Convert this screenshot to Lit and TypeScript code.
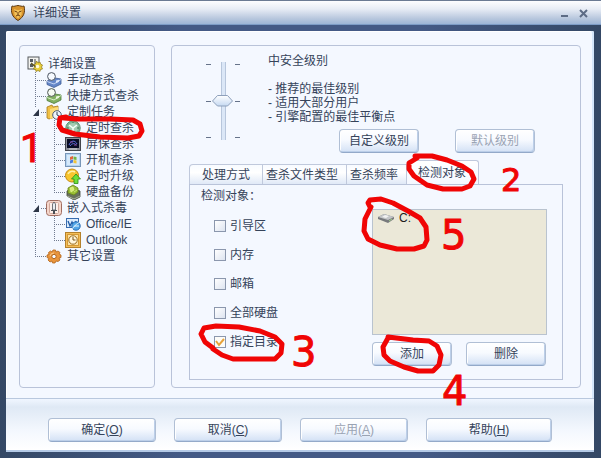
import { LitElement, html, css, svg, nothing } from "lit";
import { customElement, state } from "lit/decorators.js";
import { classMap } from "lit/directives/class-map.js";

const icons: Record<string, unknown> = {
  root: svg`<rect x="1" y="1" width="11" height="12" fill="#f4f4f0" stroke="#55585c"/><path d="M3 3h3v3H3zM3 8h3v3H3z" fill="#555a60"/><path d="M8 3v5" stroke="#444" fill="none"/><path d="M9.500 5l1.500 2 2-1 .5 2 2 1-1 2 1 2-2 .5-.5 2-2-1-2 1-.5-2-2-.5 1-2-1-2 2-1z" fill="#e8cf3c" stroke="#8d7414" stroke-width=".7"/><path d="M4 7l5 4" stroke="#5c5420" stroke-width="1.500"/><circle cx="10.500" cy="10.500" r="1.800" fill="#fffbe0"/>`,
  scanBlue: svg`<path d="M1 9l8-3 6 1v5l-7 3.500-7-3z" fill="#6486c8" stroke="#3d5a94" stroke-width=".8"/><path d="M1 9.500l7 2.500 7-4.500" fill="none" stroke="#c4d4f2"/><path d="M10 8.500l3-.8v2l-3 1.500z" fill="#dce6fa"/><circle cx="5.500" cy="4.500" r="3.900" fill="#f6faff" stroke="#4b5360"/>`,
  scanGreen: svg`<path d="M1 9l8-3 6 1v5l-7 3.500-7-3z" fill="#82b062" stroke="#4d7a38" stroke-width=".8"/><path d="M1 9.500l7 2.500 7-4.500" fill="none" stroke="#d6eec8"/><path d="M10 8.500l3-.8v2l-3 1.500z" fill="#e8f6de"/><circle cx="5.500" cy="4.500" r="3.900" fill="#f6fbf4" stroke="#4b5550"/>`,
  tasks: svg`<path d="M1 3l5-2 1 2 5-1v10l-9 3-2-1z" fill="#f0c046" stroke="#a87b1c" stroke-width=".8"/><path d="M4 5l8-2v9l-8 3z" fill="#fbdc78"/><circle cx="11" cy="11" r="4.300" fill="#eef5fc" stroke="#4d6078"/><path d="M11 8v3l2 1" fill="none" stroke="#33475f"/>`,
  clock: svg`<circle cx="8" cy="8" r="7.200" fill="#84b596" stroke="#5d8f72"/><circle cx="8" cy="8" r="5" fill="#a5cdb3"/><path d="M4 5l4 3 4-3M8 8v5" fill="none" stroke="#f5fff8" stroke-width="1.500"/><path d="M2 8h2M12 8h2M8 2v1" stroke="#3b7352"/>`,
  monitor: svg`<rect x=".5" y="1.500" width="15" height="13" fill="#8d9098" stroke="#44474e"/><rect x="2" y="3" width="12" height="9" fill="#080c24"/><path d="M4 9c2-5 6-5 8-1M5 10c2-3 5-3 6-1" fill="none" stroke="#5b6ee0"/><path d="M5 6h3M9 9h3" stroke="#8a4a9a"/><path d="M4 13h8" stroke="#d5d7dc"/>`,
  boot: svg`<rect x=".5" y="1.500" width="15" height="13" fill="#b4d3f0" stroke="#7896b8"/><rect x="2" y="3" width="12" height="10" fill="#d6e9fa"/><path d="M5 5l3-1v3l-3 1z" fill="#e0653c"/><path d="M8.500 4.500l3 .5v3l-3-.5z" fill="#72b544"/><path d="M5 8.500l3-1v3l-3 1z" fill="#4c7ddc"/><path d="M8.500 8l3 .5v3l-3-.5z" fill="#f1c337"/>`,
  upgrade: svg`<circle cx="7" cy="7.500" r="6.500" fill="#f8c62e" stroke="#c48a12"/><path d="M3 6a5 5 0 0 1 7-2" fill="none" stroke="#fff0a8" stroke-width="1.500"/><path d="M11 6l4.500 5H13v4.500H9V11H6.500z" fill="#6ddf3a" stroke="#2b8c14" stroke-width=".8"/>`,
  backup: svg`<path d="M2 7l6-3 7 3v6l-6 3-7-4z" fill="#68705c" stroke="#3e4438" stroke-width=".8"/><path d="M2 12l7 3 6-3" fill="none" stroke="#aab09c"/><path d="M8 1l5 3v4l-4 3-6-2V4z" fill="#9bbf34" stroke="#65831c" stroke-width=".8"/><path d="M5 4l3-1 1 3-3 2zM9 8l3-2" fill="#d9ec72" stroke="#e8f6a0" stroke-width=".6"/>`,
  embed: svg`<rect x=".5" y=".5" width="15" height="15" rx="3" fill="#f5d7cc" stroke="#a06d60"/><rect x="3.500" y="2.500" width="9" height="11" rx="1" fill="#fdf0ea" stroke="#d2a99c"/><path d="M8 2l1.500 2v6h-3V4z" fill="#eceff2" stroke="#50555c" stroke-width=".8"/><path d="M5 10h6v1H5zM7 11h2v3H7z" fill="#4b4f56"/>`,
  office: svg`<rect x="1.500" y="2.500" width="12" height="9" fill="#dcecfc" stroke="#386cae"/><path d="M3 5l2 5 2-4 2 4 2-5" fill="none" stroke="#1f5ba8" stroke-width="1.300"/><circle cx="11" cy="10" r="4.200" fill="#53a7e8" stroke="#256bb4"/><path d="M9 10h5M8 13c-2 0 5-7 8-7" fill="none" stroke="#e6f6ff"/>`,
  outlook: svg`<rect x=".5" y=".5" width="15" height="15" fill="#f2bd58" stroke="#b4812c"/><rect x="2.500" y="2.500" width="11" height="11" fill="#fbe1a4" stroke="#d69a34"/><circle cx="8" cy="8" r="4.200" fill="#fff6dc" stroke="#9a6c1e"/><path d="M8 5v3h2.500" fill="none" stroke="#7a5312"/>`,
  gear: svg`<path d="M7 2h2.500l.5 2 2-1 2 1.500L13 6l2 1v2.500l-2 .5 1 2-2 1.500-2-.5-1 2H6.500L6 13l-2 1-2-2 1-1.500-2-1V7l2-.5-.5-2L4.500 3 6 4z" fill="#e9953c" stroke="#b2641a" stroke-width=".8"/><circle cx="8" cy="8.500" r="2.200" fill="#f4f8fe" stroke="#b2641a"/><path d="M4 8a4 4 0 0 1 4-3" fill="none" stroke="#fbcb8c"/>`,
  drive: svg`<path d="M0 7l6-3 10 3v2l-6 4-10-4z" fill="#77797c"/><path d="M0 7l6-3 10 3-6 3z" fill="#c4c6c8"/><path d="M4 7l3-2 4 1-3 2z" fill="#f2f2f2"/><path d="M11 11l3-2" stroke="#9fd08a"/>`,
  shield: svg`<path d="M2 1c2 1 4-.5 6-.5S12 2 14 1c1.500 6 0 11-6 14.500C2 12 .5 7 2 1z" fill="#d8932c" stroke="#5e3a12"/><path d="M4 4l3 1h2l3-1-.5 6L8 13.500 4.500 10z" fill="#f3c25a"/><path d="M4.500 6l2.500 1M11.500 6L9 7M8 7v3M6 11l2-1 2 1" stroke="#6b3d10" fill="none"/>`,
};

const icon = (name: string) =>
  html`<svg class="icon" viewBox="0 0 16 16" aria-hidden="true">${icons[name]}</svg>`;

interface Node {
  icon: string;
  label: string;
  children?: Node[];
}

const tree: Node[] = [
  { icon: "scanBlue", label: "手动查杀" },
  { icon: "scanGreen", label: "快捷方式查杀" },
  {
    icon: "tasks",
    label: "定制任务",
    children: [
      { icon: "clock", label: "定时查杀" },
      { icon: "monitor", label: "屏保查杀" },
      { icon: "boot", label: "开机查杀" },
      { icon: "upgrade", label: "定时升级" },
      { icon: "backup", label: "硬盘备份" },
    ],
  },
  {
    icon: "embed",
    label: "嵌入式杀毒",
    children: [
      { icon: "office", label: "Office/IE" },
      { icon: "outlook", label: "Outlook" },
    ],
  },
  { icon: "gear", label: "其它设置" },
];

const tabs = ["处理方式", "查杀文件类型", "查杀频率", "检测对象"];
const targets = ["引导区", "内存", "邮箱", "全部硬盘", "指定目录"];
const actions = [
  { label: "确定", key: "O" },
  { label: "取消", key: "C" },
  { label: "应用", key: "A", disabled: true },
  { label: "帮助", key: "H", wide: true },
];

@customElement("app-root")
export class AppRoot extends LitElement {
  @state() private tab = 3;

  static styles = css`
    :host {
      display: flex;
      flex-direction: column;
      position: relative;
      min-height: 100vh;
      box-sizing: border-box;
      padding-bottom: 6px;
      background: linear-gradient(90deg, #344865, #445a86 30%, #445a86 70%, #344865);
      color: #35435a;
      font: 12px/14px "Liberation Sans", "Noto Sans CJK SC", sans-serif;
    }
    * { box-sizing: border-box; }
    ul { list-style: none; margin: 0; padding: 0; }
    button { font: inherit; color: inherit; padding: 0; border: 0; background: none; }
    .icon { width: 16px; height: 16px; flex: none; display: block; }

    .titlebar {
      display: flex;
      align-items: center;
      gap: 7px;
      height: 25px;
      padding: 1px 12px 0 10px;
      border-top: 1px solid #6b7a93;
      border-bottom: 1px solid #7d9cc6;
      background: linear-gradient(#fdfdff, #e7ecf5 35%, #b9c8de 75%, #9db5d6);
    }
    .title { flex: 1; margin: 0; font: inherit; }
    .winbtn { display: block; width: 10px; height: 10px; }
    .winbtn + .winbtn { margin-left: 2px; }
    .winbtn svg { display: block; width: 10px; height: 10px; }

    .client {
      flex: 1;
      display: flex;
      flex-direction: column;
      margin: 6px 7px 0 6px;
      border-radius: 2px;
      background: #f4f8ff;
      box-shadow: inset -2px 0 0 #d5e6fa, inset 1px 1px 0 #fff;
    }
    .main { flex: 1; display: flex; gap: 16px; padding: 14px 13px 10px; }
    .panel { border: 1px solid #b9c3d9; border-radius: 4px; }
    .nav { width: 136px; flex: none; padding: 10px 0 0 7px; }

    .row { display: flex; align-items: center; height: 16px; line-height: 16px; white-space: nowrap; }
    .row a { color: inherit; text-decoration: none; margin-left: 5px; }
    .level { margin-left: 8px; }
    .level .level { margin-left: 19px; }
    .level > li {
      background: repeating-linear-gradient(#717b90 0 1px, transparent 1px 2px) 0 0 / 1px 100% no-repeat;
    }
    .level > li:last-child { background-size: 1px 8px; }
    .link {
      position: relative;
      width: 11px;
      height: 1px;
      flex: none;
      background: repeating-linear-gradient(90deg, #717b90 0 1px, transparent 1px 2px);
    }
    .toggle {
      position: absolute;
      left: -4px;
      top: -4px;
      width: 10px;
      height: 9px;
      background: #f4f8ff;
    }
    .toggle svg { display: block; width: 10px; height: 9px; }

    .settings { flex: 1; min-width: 0; display: flex; flex-direction: column; padding: 0 17px 7px; }
    .level-box { display: flex; padding: 8px 0 7px 17px; }
    .scale { display: grid; grid-template-columns: 5px 24px 5px; margin: 8px 28px 0 0; height: 78px; }
    .ticks { display: flex; flex-direction: column; justify-content: space-between; padding: 2px 0; }
    .ticks i { height: 1px; background: #66738a; }
    .range {
      appearance: none;
      writing-mode: vertical-lr;
      direction: rtl;
      width: 24px;
      height: 78px;
      margin: 0;
      background: none;
    }
    .range::-webkit-slider-runnable-track { width: 24px; background: linear-gradient(90deg, #b7c6dc 1px, #dbe7f7 1px 4px, #b7c6dc 4px) center / 5px 100% no-repeat; }
    .range::-webkit-slider-thumb {
      appearance: none;
      width: 24px;
      height: 12px;
      background: url("data:image/svg+xml,%3Csvg xmlns='http://www.w3.org/2000/svg' viewBox='0 0 24 12'%3E%3ClinearGradient id='g' x2='0' y2='1'%3E%3Cstop stop-color='%23fff'/%3E%3Cstop offset='1' stop-color='%23c5d9f2'/%3E%3C/linearGradient%3E%3Cpath d='M6.500 .5h10l5 5.500-5 5h-10L1.500 6z' fill='url(%23g)' stroke='%238ea0bb'/%3E%3C/svg%3E") center / 24px 12px;
    }
    .about { flex: 1; }
    .about p, .about h2 { margin: 0 0 14px; font: inherit; }
    .about .points { height: 42px; }
    .presets { display: flex; justify-content: flex-end; gap: 36px; padding: 5px 28px 0 0; }

    .btn {
      width: 80px;
      height: 24px;
      border: 1px solid #b0bfd5;
      border-bottom-color: #93a9c9;
      border-radius: 4px;
      background: linear-gradient(#ffffff, #f7faff 45%, #d3e1f5);
      box-shadow: inset -1px -1px 0 #bccfe9, inset 1px 1px 0 #fff;
      white-space: nowrap;
    }
    .btn:disabled { color: #9aa3b3; }

    .tabs { display: flex; align-items: flex-end; height: 24px; }
    .tab {
      height: 20px;
      padding: 0 8px 0 3px;
      border: 1px solid #c0c9dc;
      border-width: 1px 1px 0 0;
      background: linear-gradient(#f8fbff, #ffffff 40%, #e0e9f7);
      white-space: nowrap;
    }
    .tab:first-child { border-left-width: 1px; border-top-left-radius: 4px; padding: 0 12px; }
    .tab.on { height: 24px; background: linear-gradient(#ffffff, #f4f8ff); border-radius: 3px 3px 0 0; padding: 0 12px 0 11px; }
    .pane {
      flex: 1;
      display: grid;
      grid-template-columns: 1fr 175px;
      padding: 3px 15px 12px 11px;
      border: 1px solid #b9c3d9;
    }
    .targets { border: 0; margin: 0; padding: 0; min-width: 0; }
    .targets legend { padding: 0; height: 23px; line-height: 16px; }
    .check { display: flex; align-items: center; gap: 4px; height: 29px; padding-left: 13px; }
    .check input {
      appearance: none;
      width: 12px;
      height: 12px;
      margin: 0;
      border: 1px solid #8b97ad;
      background: linear-gradient(135deg, #ffffff, #dde4f0);
    }
    .check input:checked {
      background: url("data:image/svg+xml,%3Csvg xmlns='http://www.w3.org/2000/svg' viewBox='0 0 10 10'%3E%3Cpath d='M1 4l3 4 5-6' fill='none' stroke='%23e8a33a' stroke-width='2'/%3E%3C/svg%3E") #fdfcf8;
    }
    .folders { padding-top: 21px; }
    .list { height: 126px; border: 1px solid #b9c3cf; background: #ebe8d8; color: #1c1c1c; }
    .list li { display: flex; align-items: center; gap: 5px; height: 16px; padding-left: 5px; }
    .edit { display: flex; gap: 14px; padding-top: 7px; }

    .footer {
      display: flex;
      gap: 18px;
      height: 54px;
      padding: 19px 42px 0;
      border-top: 1px solid #b9c8de;
      border-bottom: 2px solid #b5cae6;
      background: linear-gradient(#f0f6ff, #dfe9f5 8px, #f4f8fe 32px, #ffffff);
    }
    .footer .btn { width: 108px; }
    .footer .btn.wide { width: 126px; }

    .marks {
      position: absolute;
      left: 0;
      top: 0;
      width: 601px;
      height: 458px;
      pointer-events: none;
      fill: none;
      stroke: #f00505;
      stroke-width: 5px;
      stroke-linecap: round;
      stroke-linejoin: round;
    }
    .digit { fill: #f00505; stroke-width: 1px; font: 40px "DejaVu Sans", sans-serif; }
    .digit.small { font-size: 32px; }
    .digit.thin { font-family: Roboto, sans-serif; }
  `;

  private renderNodes(nodes: Node[]): unknown {
    return html`<ul class="level">
      ${nodes.map(
        (n) => html`<li>
          <div class="row">
            <span class="link"
              >${n.children
                ? html`<button class="toggle" aria-label=${"折叠 " + n.label}>
                    <svg viewBox="0 0 10 9"><path d="M8 1v7H2z" fill="#2d3647" /></svg>
                  </button>`
                : nothing}</span
            >
            ${icon(n.icon)}<a href="#">${n.label}</a>
          </div>
          ${n.children ? this.renderNodes(n.children) : nothing}
        </li>`
      )}
    </ul>`;
  }

  render() {
    return html`
      <header class="titlebar">
        ${icon("shield")}
        <h1 class="title">详细设置</h1>
        <button class="winbtn" aria-label="最小化">
          <svg viewBox="0 0 10 10"><path d="M1 8h7" stroke="#5d6c85" stroke-width="2" /></svg>
        </button>
        <button class="winbtn" aria-label="关闭">
          <svg viewBox="0 0 10 10"><path d="M1 2l7 7M8 2L1 9" stroke="#5d6c85" stroke-width="2" /></svg>
        </button>
      </header>

      <div class="client">
        <div class="main">
          <nav class="panel nav">
            <div class="row">${icon("root")}<a href="#">详细设置</a></div>
            ${this.renderNodes(tree)}
          </nav>

          <section class="panel settings">
            <div class="level-box">
              <div class="scale">
                <div class="ticks"><i></i><i></i><i></i></div>
                <input class="range" type="range" min="0" max="2" value="1" aria-label="安全级别" />
                <div class="ticks"><i></i><i></i><i></i></div>
              </div>
              <div class="about">
                <h2>中安全级别</h2>
                <ul class="points">
                  <li>- 推荐的最佳级别</li>
                  <li>- 适用大部分用户</li>
                  <li>- 引擎配置的最佳平衡点</li>
                </ul>
                <div class="presets">
                  <button class="btn">自定义级别</button>
                  <button class="btn" disabled>默认级别</button>
                </div>
              </div>
            </div>

            <div class="tabs" role="tablist">
              ${tabs.map(
                (t, i) => html`<button
                  role="tab"
                  aria-selected=${i === this.tab}
                  class=${classMap({ tab: true, on: i === this.tab })}
                  @click=${() => (this.tab = i)}
                >${t}</button>`
              )}
            </div>
            <div class="pane" role="tabpanel">
              <fieldset class="targets">
                <legend>检测对象：</legend>
                ${targets.map(
                  (t, i) => html`<label class="check">
                    <input type="checkbox" ?checked=${i === 4} />${t}
                  </label>`
                )}
              </fieldset>
              <div class="folders">
                <ul class="list">
                  <li>${icon("drive")}C:</li>
                </ul>
                <div class="edit">
                  <button class="btn">添加</button>
                  <button class="btn">删除</button>
                </div>
              </div>
            </div>
          </section>
        </div>

        <footer class="footer">
          ${actions.map(
            (a) => html`<button
              class=${classMap({ btn: true, wide: !!a.wide })}
              ?disabled=${a.disabled}
            >${a.label}(<u>${a.key}</u>)</button>`
          )}
        </footer>
      </div>

      <svg class="marks" viewBox="0 0 601 458">
        <path d="M64 118L77 119 110 119 133 120 140 124 142 131 139 136 128 138 100 137 75 134 62 130 59 125 60 118 66 117" />
        <path d="M415 156H432L447 160 462 166 471 172 474 179 470 186 462 189H443L427 185 414 176 409 169 409 163 417 158" />
        <path d="M370 207L368 203 370 200 381 199 393 203 408 211 420 218 426 227 427 240 424 246 414 249 397 249 380 245 368 239 364 231 365 219 371 207" />
        <path d="M213 348L205 342 201 334 204 328 216 326 239 327 260 331 275 337 282 344 281 353 275 359H233L222 355 213 349" />
        <path d="M388 337L413 340 429 341 437 346 441 355 439 365 433 371 418 371 404 367 390 361 384 355 383 347 388 338" />
        <text class="digit thin" x="20" y="162">1</text>
        <text class="digit small" x="501" y="191">2</text>
        <text class="digit" x="291" y="366">3</text>
        <text class="digit" x="442" y="405">4</text>
        <text class="digit" x="441" y="249">5</text>
      </svg>
    `;
  }
}
